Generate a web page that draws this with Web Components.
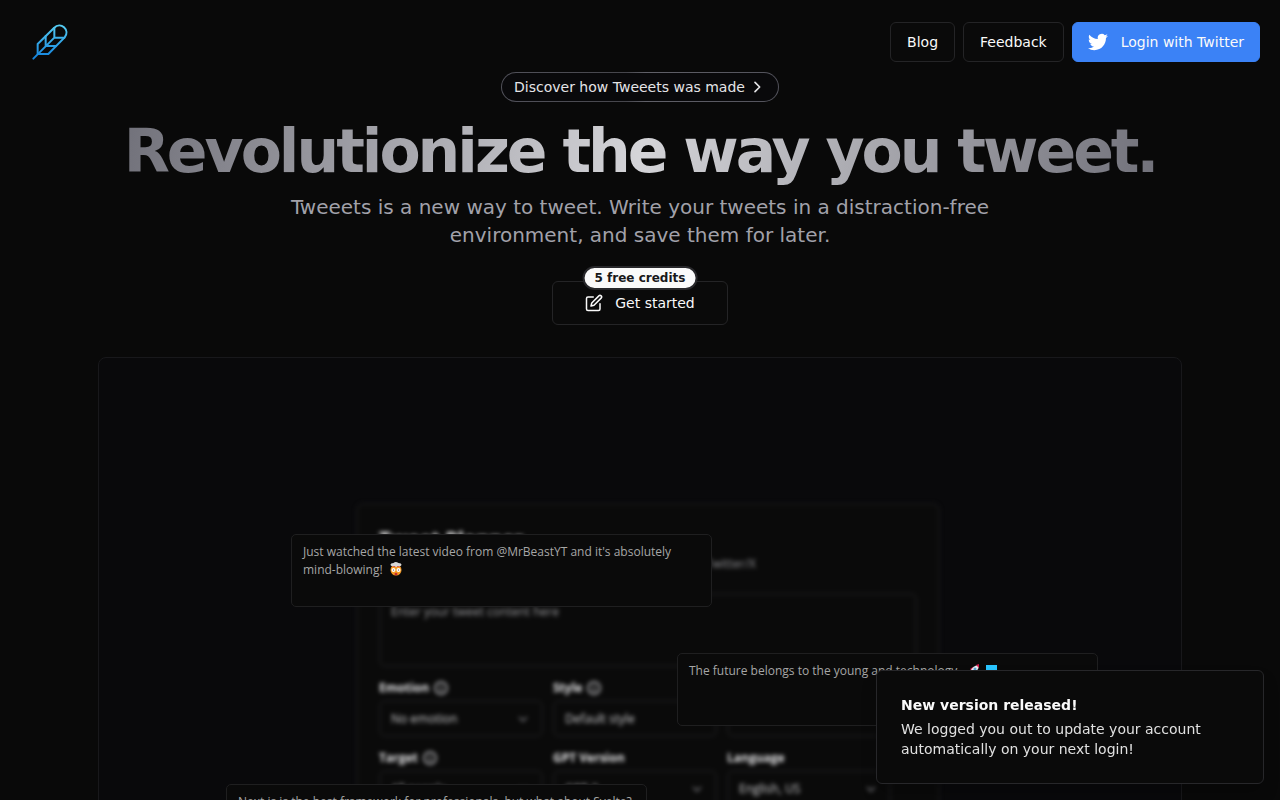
<!DOCTYPE html>
<html lang="en">
<head>
<meta charset="utf-8">
<meta name="viewport" content="width=device-width, initial-scale=1">
<title>Tweeets</title>
<style>
  html { background: #090909; color-scheme: dark; }
  body { margin: 0; font-family: "DejaVu Sans", sans-serif; font-size: 14px; line-height: 20px; color: #fafafa; }
</style>
</head>
<body>
<tw-page></tw-page>

<template id="tw-page">
  <style>
    :host { display: block; min-height: 100vh; }
    main { display: flex; flex-direction: column; align-items: center; padding: 10px 98px 48px; }
    tw-heading { margin-top: 13px; }
    p { margin: 6px 0 32px; max-width: 740px; font-size: 20px; line-height: 28px; text-align: center; color: #a1a1aa; }
    tw-preview { margin-top: 32px; align-self: stretch; }
    .credit { position: relative; }
    tw-badge { position: absolute; top: -15px; left: 50%; transform: translateX(-50%); }
  </style>
  <tw-header>
    <tw-button href="#blog">Blog</tw-button>
    <tw-button href="#feedback">Feedback</tw-button>
    <tw-button primary>
      <svg slot="icon" width="20" height="20" viewBox="0 0 24 24" fill="#fff" aria-hidden="true"><path d="M23.95 4.57a10 10 0 0 1-2.82.77 4.96 4.96 0 0 0 2.16-2.72c-.95.55-2 .96-3.13 1.18a4.92 4.92 0 0 0-8.38 4.48C7.69 8.09 4.07 6.13 1.64 3.16a4.82 4.82 0 0 0-.67 2.48c0 1.71.87 3.21 2.19 4.1a4.9 4.9 0 0 1-2.23-.62v.06a4.92 4.92 0 0 0 3.95 4.83 5 5 0 0 1-2.21.08 4.94 4.94 0 0 0 4.6 3.42A9.87 9.87 0 0 1 0 19.54a13.99 13.99 0 0 0 7.55 2.21c9.05 0 14-7.5 14-13.98 0-.21 0-.42-.02-.63a9.94 9.94 0 0 0 2.42-2.57z"/></svg>
      Login with Twitter
    </tw-button>
  </tw-header>
  <main>
    <tw-pill href="#how">Discover how Tweeets was made</tw-pill>
    <tw-heading>Revolutionize the way you tweet.</tw-heading>
    <p>Tweeets is a new way to tweet. Write your tweets in a distraction-free environment, and save them for later.</p>
    <div class="credit">
      <tw-button large>
        <svg slot="icon" width="18" height="18" viewBox="0 0 24 24" fill="none" stroke="currentColor" stroke-width="2" stroke-linecap="round" stroke-linejoin="round" aria-hidden="true"><path d="M11 4H4a2 2 0 0 0-2 2v14a2 2 0 0 0 2 2h14a2 2 0 0 0 2-2v-7"/><path d="M18.5 2.5a2.12 2.12 0 0 1 3 3L12 15l-4 1 1-4 9.5-9.5z"/></svg>
        Get started
      </tw-button>
      <tw-badge>5 free credits</tw-badge>
    </div>
    <tw-preview></tw-preview>
  </main>
  <tw-toast>
    <span slot="title">New version released!</span>
    We logged you out to update your account automatically on your next login!
  </tw-toast>
</template>

<template id="tw-header">
  <style>
    :host { display: block; }
    header { display: flex; align-items: center; justify-content: space-between; padding: 22px 20px 0 30px; }
    nav { display: flex; gap: 8px; }
    a, svg { display: block; }
  </style>
  <header>
    <a href="#home" aria-label="Tweeets home">
      <svg width="40" height="40" viewBox="90 66 120 120" fill="none" stroke="url(#feather)" stroke-width="6" stroke-linecap="round" stroke-linejoin="round" aria-hidden="true">
        <defs><linearGradient id="feather" gradientUnits="userSpaceOnUse" x1="0" y1="76" x2="0" y2="176"><stop offset="0" stop-color="#56ccf2"/><stop offset="1" stop-color="#1282dc"/></linearGradient></defs>
        <path d="M113 162V132L162 84C172 74 184 75 192 82C201 90 202 102 194 112L145 162H113"/>
        <path d="M100 176L163 113M163 84V113H193M137 108V138H168"/>
      </svg>
    </a>
    <nav aria-label="Main"><slot></slot></nav>
  </header>
</template>

<template id="tw-button">
  <style>
    :host { display: inline-block; }
    a, button { box-sizing: border-box; display: flex; align-items: center; gap: 12px; height: 40px; padding: 0 16px; border: 1px solid #242426; border-radius: 6px; background: #0a0a0a; color: #fafafa; font: inherit; text-decoration: none; white-space: nowrap; cursor: pointer; }
    :host([primary]) button { gap: 13px; padding: 0 15px; border-color: #3b82f6; background: #3b82f6; }
    :host([large]) button { height: 44px; padding: 0 32px; }
  </style>
</template>

<template id="tw-badge">
  <style>
    :host { display: block; padding: 0 10px; border: 2px solid #27272a; border-radius: 12px; background: #fafafa; color: #18181b; font-size: 12px; line-height: 20px; font-weight: 700; white-space: nowrap; }
  </style>
  <slot></slot>
</template>

<template id="tw-pill">
  <style>
    :host { display: block; }
    a { display: flex; align-items: center; gap: 4px; padding: 4px 13px 4px 12px; border: 1px solid transparent; border-radius: 15px; background: linear-gradient(#09090b, #09090b) padding-box, linear-gradient(90deg, #52525b, #45454b 45%, #606068 52%, #52525b) border-box; color: #e4e4e7; text-decoration: none; }
  </style>
  <a><slot></slot><svg width="16" height="16" viewBox="0 0 24 24" fill="none" stroke="currentColor" stroke-width="2.500" stroke-linecap="round" stroke-linejoin="round" aria-hidden="true"><path d="M9 19l7-7-7-7"/></svg></a>
</template>

<template id="tw-heading">
  <style>
    :host { display: block; }
    h1 { margin: 0; font-size: 60px; line-height: 72px; font-weight: 700; letter-spacing: -0.05em; text-align: center; background: linear-gradient(100deg, #71717a, #d4d4d8 50%, #71717a); -webkit-background-clip: text; background-clip: text; color: transparent; }
  </style>
  <h1><slot></slot></h1>
</template>

<template id="tw-preview">
  <style>
    :host { display: block; box-sizing: border-box; overflow: hidden; border: 1px solid #18181b; border-radius: 8px; background: #09090b; }
    .stage { position: relative; display: flow-root; max-width: 1082px; margin: 0 auto; padding-bottom: 72px; }
    tw-composer { margin: 145px 0 0 257px; }
    tw-tweet { position: absolute; }
    .one { left: 192px; top: 176px; }
    .two { left: 578px; top: 295px; }
    .three { left: 127px; top: 426px; }
    svg { vertical-align: -2px; margin-left: 3px; }
  </style>
  <div class="stage">
    <tw-composer></tw-composer>
    <tw-tweet class="one">Just watched the latest video from @MrBeastYT and it's absolutely mind-blowing!
      <svg width="14" height="14" viewBox="0 0 13 14" role="img" aria-label="Mind blown"><circle cx="6.500" cy="8" r="5.500" fill="#f59a23"/><path d="M2 5l2-1h5l2 1z" fill="#d9472b"/><path d="M1 3q0-2 3-2 2-2 5 0 3 0 3 2-1 2-4 1-1 2-3 0-3 1-4-1z" fill="#d8d8d8"/><circle cx="4" cy="8" r="2" fill="#fff"/><circle cx="9" cy="8" r="2" fill="#fff"/><circle cx="4" cy="8" r=".6" fill="#543"/><circle cx="9" cy="8" r=".6" fill="#543"/><ellipse cx="6.500" cy="12" rx="1.500" ry="1.300" fill="#c52b2b"/></svg>
    </tw-tweet>
    <tw-tweet class="two">The future belongs to the young and technology.
      <svg width="13" height="13" viewBox="0 0 13 13" role="img" aria-label="Rocket"><path d="M3 5L6 3 10 7 8 10zM0 12l2-4 3 3z" fill="#d51a4c"/><path d="M3 8Q6 1 12 1Q12 7 5 10z" fill="#e8edf2"/><path d="M9 1l3-1v4z" fill="#d51a4c"/><circle cx="8" cy="5" r="1.500" fill="#5ba4cf"/></svg>
      <svg width="11" height="12" viewBox="0 0 11 12" role="img" aria-label="Blue square"><path d="M0 0h11v12H0z" fill="#29c5ff"/></svg>
    </tw-tweet>
    <tw-tweet class="three">Next.js is the best framework for professionals, but what about Svelte?</tw-tweet>
  </div>
</template>

<template id="tw-tweet">
  <style>
    :host { display: block; box-sizing: border-box; width: 421px; min-height: 73px; padding: 8px 11px; border: 1px solid #1f1f20; border-radius: 5px; background: #0a0a0a; color: #a6a6a6; font-family: "Open Sans", "Noto Sans", sans-serif; font-size: 12px; line-height: 18px; }
  </style>
  <slot></slot>
</template>

<template id="tw-composer">
  <style>
    :host { display: block; box-sizing: border-box; width: 584px; padding: 22px 21px; border: 2px solid #151516; border-radius: 8px; background: #0a0a0a; filter: blur(2px); font-family: "Open Sans", "Noto Sans", sans-serif; font-size: 12px; line-height: 18px; color: #a0a0a0; }
    h2 { margin: 0; font-size: 20px; line-height: 24px; color: #f0f0f0; }
    p { margin: 4px 161px 0 0; text-align: right; color: #909094; }
    textarea { display: block; box-sizing: border-box; width: 100%; height: 74px; margin: 20px 0 12px; padding: 8px 10px; resize: none; border: 2px solid #171718; border-radius: 6px; background: transparent; color: inherit; font: inherit; }
    textarea::placeholder { color: #99999c; opacity: 1; }
    form { display: grid; grid-template-columns: repeat(3, 164px); column-gap: 10px; row-gap: 12px; }
  </style>
  <h2>Tweet Planner</h2>
  <p>Twitter/X</p>
  <textarea aria-label="Tweet content" placeholder="Enter your tweet content here"></textarea>
  <form>
    <tw-field label="Emotion" value="No emotion" info></tw-field>
    <tw-field label="Style" value="Default style" info></tw-field>
    <tw-field></tw-field>
    <tw-field label="Target" value="All people" info></tw-field>
    <tw-field label="GPT Version" value="GPT-3"></tw-field>
    <tw-field label="Language" value="English, US"></tw-field>
  </form>
</template>

<template id="tw-field">
  <style>
    :host { display: block; }
    .head { display: flex; align-items: center; gap: 5px; height: 18px; margin-bottom: 3px; }
    label { font-weight: 700; color: #e4e4e6; }
    .box { display: grid; align-items: center; }
    .box > * { grid-area: 1 / 1; }
    .box svg { justify-self: end; margin-right: 13px; pointer-events: none; }
    select { appearance: none; box-sizing: border-box; width: 100%; height: 37px; padding: 0 10px; border: 2px solid #171718; border-radius: 6px; background: transparent; color: #ccccce; font: inherit; }
  </style>
  <div class="head"><label for="s"></label></div>
  <div class="box"><select id="s"><option></option></select><svg width="14" height="14" viewBox="0 0 14 14" fill="none" stroke="#58585b" stroke-width="2" aria-hidden="true"><path d="M3 5l4 4 4-4"/></svg></div>
</template>

<template id="tw-toast">
  <style>
    :host { position: fixed; right: 16px; bottom: 16px; box-sizing: border-box; display: block; width: 388px; max-width: calc(100vw - 32px); padding: 24px; border: 1px solid #27272a; border-radius: 6px; background: #0a0a0a; box-shadow: 0 10px 15px rgba(0, 0, 0, .2); }
    div { font-weight: 700; margin-bottom: 4px; }
    p { margin: 0; color: #e0e0e0; }
  </style>
  <section role="status">
    <div><slot name="title"></slot></div>
    <p><slot></slot></p>
  </section>
</template>

<script>
  class TemplateElement extends HTMLElement {
    constructor() {
      super();
      this.attachShadow({ mode: 'open' });
    }
    connectedCallback() {
      if (this.shadowRoot.childNodes.length) return;
      const template = document.getElementById(this.localName);
      this.shadowRoot.append(document.importNode(template.content, true));
      this.setup();
    }
    setup() {}
  }

  class TwButton extends TemplateElement {
    setup() {
      const isLink = this.hasAttribute('href');
      const control = document.createElement(isLink ? 'a' : 'button');
      if (isLink) control.href = this.getAttribute('href');
      else control.type = 'button';
      control.innerHTML = (this.querySelector('[slot=icon]') ? '<slot name="icon"></slot>' : '') + '<span><slot></slot></span>';
      this.shadowRoot.append(control);
    }
  }

  class TwPill extends TemplateElement {
    setup() { this.shadowRoot.querySelector('a').href = this.getAttribute('href'); }
  }

  class TwField extends TemplateElement {
    setup() {
      const root = this.shadowRoot;
      const name = this.getAttribute('label') || '';
      root.querySelector('label').textContent = name;
      root.querySelector('option').textContent = this.getAttribute('value') || '';
      if (!name) root.querySelector('select').setAttribute('aria-label', 'Option');
      if (this.hasAttribute('info')) {
        root.querySelector('.head').insertAdjacentHTML('beforeend',
          '<svg width="14" height="14" viewBox="0 0 14 14" fill="none" stroke="#a0a0a3" stroke-width="2" aria-hidden="true"><circle cx="7" cy="7" r="6"/><path d="M7 6v4M7 4v1"/></svg>');
      }
    }
  }

  customElements.define('tw-button', TwButton);
  customElements.define('tw-pill', TwPill);
  customElements.define('tw-field', TwField);
  for (const name of ['tw-header', 'tw-badge', 'tw-heading', 'tw-tweet', 'tw-composer', 'tw-preview', 'tw-toast', 'tw-page']) {
    customElements.define(name, class extends TemplateElement {});
  }
</script>
</body>
</html>
